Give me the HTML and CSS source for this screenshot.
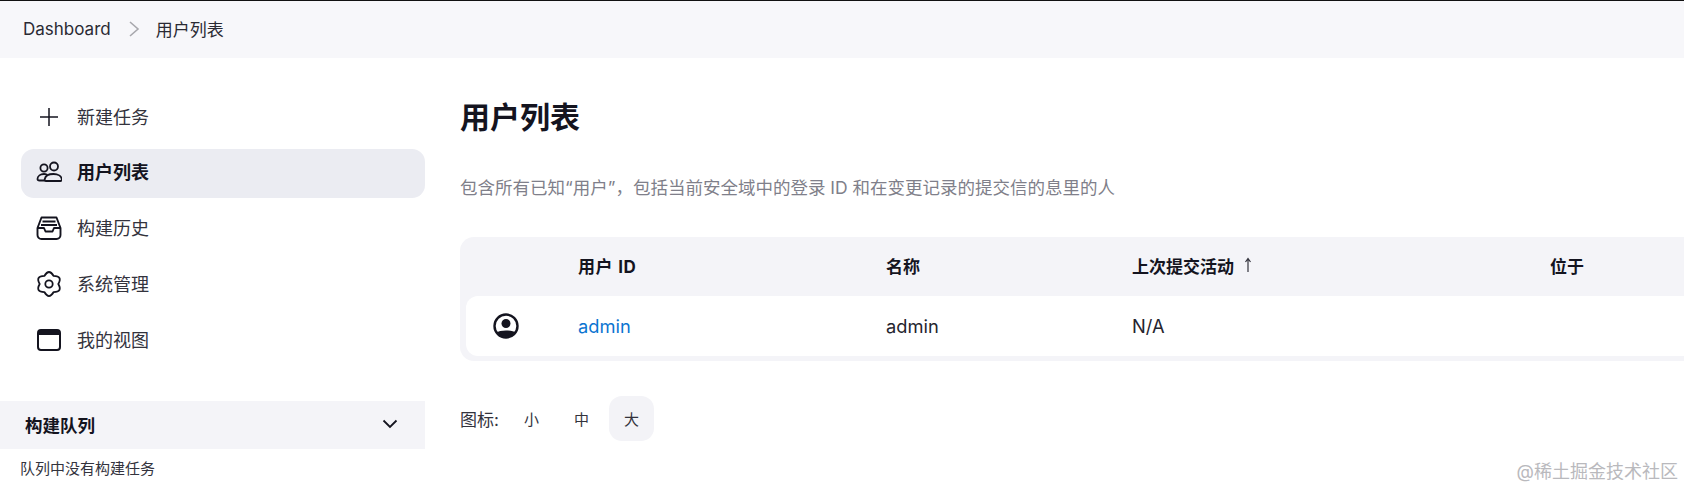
FILE: index.html
```html
<!DOCTYPE html>
<html lang="zh-CN">
<head>
<meta charset="utf-8">
<title>用户列表</title>
<link rel="stylesheet" href="styles.css">
</head>
<body>
<header class="crumbs">
  <span>Dashboard</span>
  <svg class="crumb-sep" width="14" height="18" viewBox="0 0 14 18"><path d="M3 2l8 7-8 7" fill="none" stroke="#a8a8ad" stroke-width="1.6"/></svg>
  <span>用户列表</span>
</header>
<div class="page">
  <aside class="side">
    <nav class="nav">
      <a class="nav-item">
        <svg class="ico" viewBox="0 0 26 26"><path d="M13 4v18M4 13h18" fill="none" stroke="#14141f" stroke-width="1.5"/></svg>
        <span>新建任务</span>
      </a>
      <a class="nav-item active">
        <svg class="ico" viewBox="0 0 26 26" fill="none" stroke="#14141f" stroke-width="1.8" stroke-linecap="round"><circle cx="8" cy="9" r="3.6"/><circle cx="18" cy="7.5" r="4"/><path d="M1.500 20c0-3 3-5 6.500-5 1 0 2 .2 2.800.5M1.500 20c0 1 .8 1.500 2 1.500h5"/><path d="M10 22c-1 0-1.500-.8-1.300-1.800C9.300 17 13 15 17.500 15s8 2 8.300 5.200c.1 1-.4 1.800-1.300 1.800z"/></svg>
        <span>用户列表</span>
      </a>
      <a class="nav-item">
        <svg class="ico" viewBox="0 0 26 26" fill="none" stroke="#14141f" stroke-width="1.9" stroke-linejoin="round"><path d="M5.500 2.500h15L24.500 13v7a4 4 0 0 1-4 4h-15a4 4 0 0 1-4-4v-7z"/><path d="M1.500 13h6.500l1.500 3.500h7l1.500-3.500h6.500M6.500 6.500h13M5 10h16"/></svg>
        <span>构建历史</span>
      </a>
      <a class="nav-item">
        <svg class="ico" viewBox="0 0 26 26" fill="none" stroke="#14141f" stroke-width="1.8" stroke-linejoin="round"><path d="M8.350 4.950Q13 -3 17.650 4.950Q26.860 5 22.300 13Q26.860 21 17.650 21.050Q13 29 8.350 21.050Q-.86 21 3.700 13Q-.86 5 8.350 4.950z"/><circle cx="13" cy="13" r="3.700"/></svg>
        <span>系统管理</span>
      </a>
      <a class="nav-item">
        <svg class="ico" viewBox="0 0 26 26"><rect x="2" y="3" width="22" height="20" rx="3" fill="none" stroke="#14141f" stroke-width="2"/><path d="M2 6a3 3 0 0 1 3-3h16a3 3 0 0 1 3 3v2H2z" fill="#14141f"/></svg>
        <span>我的视图</span>
      </a>
    </nav>
    <section class="queue">
      <div class="queue-head">
        <span>构建队列</span>
        <svg width="18" height="12" viewBox="0 0 18 12"><path d="M2.500 2.500L9 9l6.500-6.500" fill="none" stroke="#14141f" stroke-width="1.800"/></svg>
      </div>
      <p class="queue-empty">队列中没有构建任务</p>
    </section>
  </aside>
  <main class="main">
    <h1 class="title">用户列表</h1>
    <p class="desc">包含所有已知“用户”&#65292;包括当前安全域中的登录 ID 和在变更记录的提交信的息里的人</p>
    <div class="table">
      <div class="row head">
        <span></span>
        <span class="id-head">用户 ID</span>
        <span>名称</span>
        <span class="sort-head">上次提交活动<svg class="arrow" width="8" height="16" viewBox="0 0 8 16"><path d="M4 15V2M1.500 5L4 1.500 6.500 5" fill="none" stroke="#33333d" stroke-width="1.200"/></svg></span>
        <span>位于</span>
      </div>
      <div class="row body">
        <svg class="avatar" viewBox="0 0 26 26"><defs><clipPath id="c"><circle cx="13" cy="13" r="11"/></clipPath></defs><circle cx="13" cy="10.500" r="4.500" fill="#14141f"/><path d="M0 26v-4c3-3.500 8-4.500 13-4.500s10 1 13 4.500v4z" fill="#14141f" clip-path="url(#c)"/><circle cx="13" cy="13" r="11.500" fill="none" stroke="#14141f" stroke-width="2.400"/></svg>
        <a class="link">admin</a>
        <span>admin</span>
        <span>N/A</span>
        <span></span>
      </div>
    </div>
    <div class="sizes">
      <span class="sizes-label">图标:</span>
      <span class="size">小</span>
      <span class="size">中</span>
      <span class="size on">大</span>
    </div>
  </main>
</div>
<div class="mark">@稀土掘金技术社区</div>
</body>
</html>
```

FILE: styles.css
```css
* { box-sizing: border-box; }
html, body { margin: 0; height: 489px; overflow: hidden; }
body {
  background: #fff;
  color: #14141f;
  font-family: Inter, "Noto Sans CJK SC", sans-serif;
  border-top: 1px solid #111;
  position: relative;
}
.crumbs {
  height: 57px;
  background: #f7f7fa;
  display: flex;
  align-items: center;
  padding: 0 0 2px 23px;
  font-size: 17px;
  color: #2a2a33;
}
.crumb-sep { margin: 0 15px 0 16px; }
.page {
  display: grid;
  grid-template-columns: 425px 1fr;
  column-gap: 35px;
}
.side { padding-top: 35px; }
.nav { display: flex; flex-direction: column; gap: 6.800px; padding-left: 21px; }
.nav-item {
  height: 49px;
  border-radius: 13px;
  display: flex;
  align-items: center;
  gap: 15px;
  padding-left: 15px;
  font-size: 18px;
  color: #33333d;
}
.nav-item span { margin-bottom: 4px; }
.nav-item.active { background: #ebecf2; font-weight: 700; color: #14141f; }
.ico { width: 26px; height: 26px; flex: none; margin-bottom: 2px; }
.queue { margin-top: 36px; }
.queue-head {
  height: 48px;
  background: #f4f4f8;
  display: flex;
  align-items: center;
  justify-content: space-between;
  padding: 0 26px 2px 25px;
  font-size: 17.500px;
  font-weight: 700;
}
.queue-empty { margin: 8px 0 0 20px; font-size: 15px; line-height: 24px; color: #33333d; }
.title {
  margin: 41px 0 0;
  font-size: 30px;
  line-height: 36px;
  font-weight: 700;
}
.desc {
  margin: 41px 0 0;
  font-size: 17.500px;
  line-height: 24px;
  color: #7f7f8a;
  white-space: nowrap;
}
.table {
  margin-top: 37px;
  width: 1300px;
  background: #f4f4f8;
  border-radius: 14px 0 0 14px;
  padding: 0 0 5px 6px;
}
.row {
  display: grid;
  grid-template-columns: 112px 308px 246px 418px 1fr;
  align-items: center;
  height: 59px;
}
.row.head { font-size: 17px; font-weight: 700; padding-bottom: 3px; }
.id-head { word-spacing: 1px; letter-spacing: .4px; }
.sort-head { display: flex; align-items: center; }
.row.body {
  height: 60px;
  background: #fff;
  border-radius: 12px 0 0 12px;
  font-size: 18.300px;
  color: #24242e;
}
.arrow { margin-left: 10px; }
.avatar { width: 26px; height: 26px; margin-left: 27px; }
.link { color: #0b74d1; }
.sizes {
  margin-top: 35px;
  display: flex;
  align-items: center;
  gap: 5px;
  font-size: 16px;
  color: #33333d;
}
.sizes-label { font-size: 17px; width: 44px; }
.size {
  width: 45px;
  height: 45px;
  border-radius: 13px;
  display: flex;
  align-items: center;
  justify-content: center;
  font-size: 15px;
}
.size.on { background: #f3f3f7; }
.mark {
  position: absolute;
  right: 6px;
  bottom: 5px;
  font-size: 18px;
  line-height: 24px;
  color: #b9b9bd;
}
```
